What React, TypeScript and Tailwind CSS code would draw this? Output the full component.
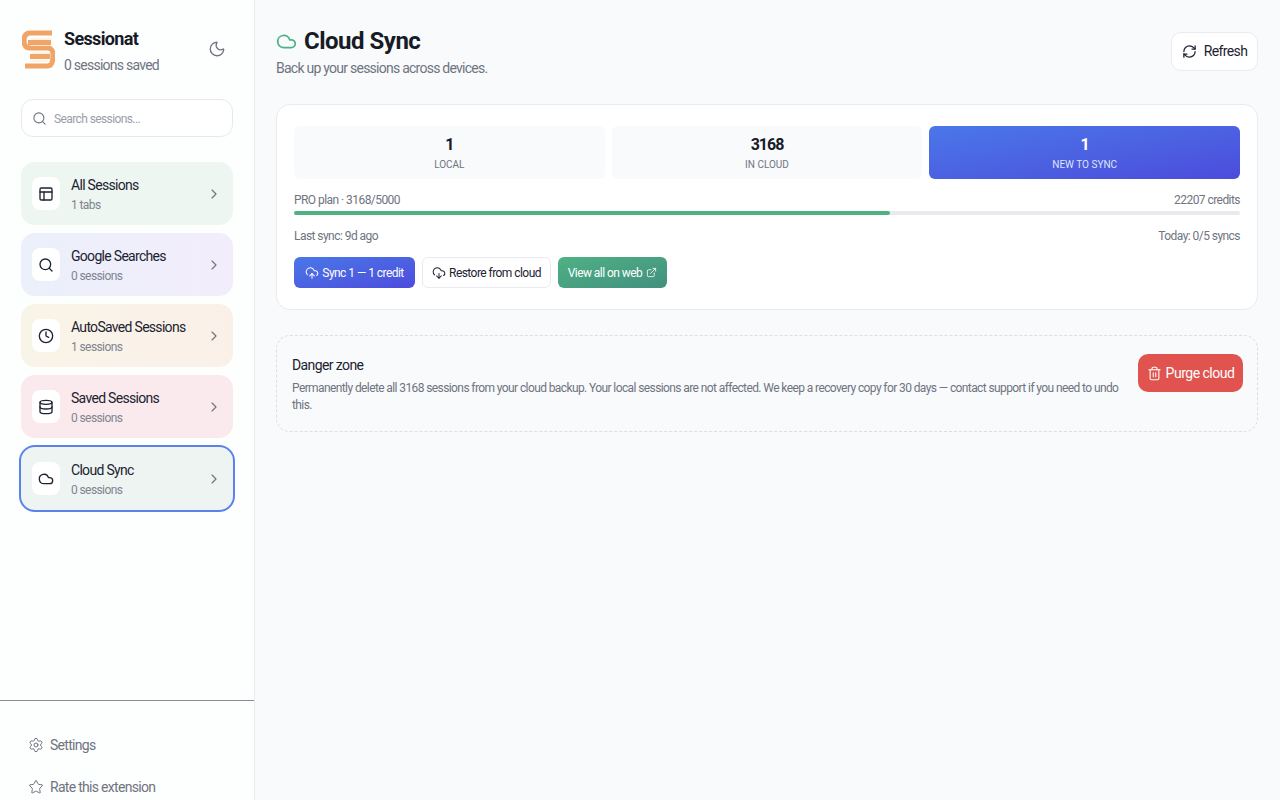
import {
  ChevronRight,
  Clock,
  Cloud,
  CloudDownload,
  CloudUpload,
  Database,
  ExternalLink,
  Moon,
  PanelsTopLeft,
  RefreshCw,
  Search,
  Settings,
  Star,
  Trash2,
} from 'lucide-react'
import type { ReactNode } from 'react'

function Logo() {
  return (
    <svg width="33" height="40" viewBox="0 0 33 40" fill="none" className="mt-[1px] shrink-0">
      <path
        d="M30 3H8.500C4 3 2 5.500 2 10.500S4 18 8.500 18H25.500C29.500 18 31 20 31 25.500S29.500 36 25.500 36H3"
        stroke="#f0a465"
        strokeWidth="5"
      />
      <path d="M6 12.500H29" stroke="#f0a465" strokeWidth="5" />
      <path d="M8 26.500H28" stroke="#f0a465" strokeWidth="5" />
      <path d="M9 9H30M9 15.500H27M10 23H28M8 31H26" stroke="#fbe6d4" strokeWidth="1" />
    </svg>
  )
}

function NavItem({
  icon,
  title,
  sub,
  bg,
  active,
}: {
  icon: ReactNode
  title: string
  sub: string
  bg: string
  active?: boolean
}) {
  return (
    <div
      className={`flex h-[63px] items-center rounded-[14px] pl-[11px] pr-[11px] ${bg} ${
        active ? 'mt-[1px] outline-2 outline-[#5b82ec]' : ''
      }`}
    >
      <div className="flex h-[33px] w-[28px] shrink-0 items-center justify-center rounded-[8px] bg-white text-[#1c2230]">
        {icon}
      </div>
      <div className="ml-[11px] mt-[3px] min-w-0 flex-1">
        <div className="text-[14px] leading-[18px] tracking-[-0.7px] text-[#1c2230]">{title}</div>
        <div className="mt-[2px] text-[12px] leading-[18px] tracking-[-0.6px] text-[#7f8490]">{sub}</div>
      </div>
      <ChevronRight size={16} strokeWidth={1.75} className="text-[#6f7480]" />
    </div>
  )
}

function Stat({ value, label, primary }: { value: string; label: string; primary?: boolean }) {
  return (
    <div
      className={`flex h-[53px] flex-1 flex-col items-center justify-center rounded-[6px] pt-[2px] ${
        primary ? 'bg-gradient-to-br from-[#4a77e8] to-[#4c4bdc] text-white' : 'bg-[#f9fafb]'
      }`}
    >
      <div
        className={`text-[16px] font-bold leading-[22px] tracking-[-1px] ${primary ? '' : 'text-[#161b26]'}`}
      >
        {value}
      </div>
      <div className={`mt-[1px] text-[10px] leading-[16px] ${primary ? 'text-[#dfe5fb]' : 'text-[#6f7480]'}`}>
        {label}
      </div>
    </div>
  )
}

export default function App() {
  return (
    <div className="flex h-[800px] w-[1280px] overflow-hidden bg-[#f9fafc] font-[Roboto,sans-serif]">
      <aside className="flex w-[255px] shrink-0 flex-col border-r border-[#e9ebef] bg-[#fdfefe]">
        <div className="flex items-start pl-[22px] pr-[28px] pt-[29px]">
          <Logo />
          <div className="ml-[9px] flex-1">
            <div className="text-[18px] font-bold leading-[20px] tracking-[-0.65px] text-[#161b26]">Sessionat</div>
            <div className="mt-[7px] text-[14px] leading-[18px] tracking-[-0.75px] text-[#6f7480]">0 sessions saved</div>
          </div>
          <Moon size={18} strokeWidth={1.75} className="mt-[11px] text-[#6f7480]" />
        </div>
        <div className="mx-[21px] mt-[25px] flex h-[38px] items-center rounded-[12px] border border-[#e7e9ee] bg-white pl-[10px]">
          <Search size={15} strokeWidth={1.75} className="text-[#6f7480]" />
          <span className="ml-[7px] pt-[1px] text-[12px] tracking-[-0.6px] text-[#9a9ea8]">Search sessions...</span>
        </div>
        <nav className="mx-[21px] mt-[25px] flex flex-col gap-[8px]">
          <NavItem
            icon={<PanelsTopLeft size={16} strokeWidth={2} />}
            title="All Sessions"
            sub="1 tabs"
            bg="bg-[#eef6f1]"
          />
          <NavItem
            icon={<Search size={16} strokeWidth={2} />}
            title="Google Searches"
            sub="0 sessions"
            bg="bg-gradient-to-r from-[#ebf0fb] to-[#f3edfb]"
          />
          <NavItem
            icon={<Clock size={16} strokeWidth={2} />}
            title="AutoSaved Sessions"
            sub="1 sessions"
            bg="bg-gradient-to-r from-[#f9f4e8] to-[#faf0e8]"
          />
          <NavItem
            icon={<Database size={16} strokeWidth={2} />}
            title="Saved Sessions"
            sub="0 sessions"
            bg="bg-[#faeaed]"
          />
          <NavItem
            icon={<Cloud size={16} strokeWidth={2} />}
            title="Cloud Sync"
            sub="0 sessions"
            bg="bg-[#edf4f1]"
            active
          />
        </nav>
        <div className="mt-auto h-[100px] border-t-[1.500px] border-[#8a8b95] pl-[28px] pt-[34px] text-[14px] tracking-[-0.7px] text-[#6f7480]">
          <div className="flex h-[20px] items-center gap-[6px]">
            <Settings size={16} strokeWidth={1.5} />
            Settings
          </div>
          <div className="mt-[22px] flex h-[20px] items-center gap-[6px]">
            <Star size={16} strokeWidth={1.5} />
            Rate this extension
          </div>
        </div>
      </aside>
      <main className="min-w-0 flex-1 pl-[21px] pr-[22px] pt-[27px]">
        <div className="flex items-start justify-between">
          <div>
            <div className="flex items-center gap-[7px]">
              <Cloud size={21} strokeWidth={2} className="text-[#4fb184]" />
              <h1 className="text-[24px] font-bold leading-[28px] tracking-[-0.5px] text-[#161b26]">Cloud Sync</h1>
            </div>
            <p className="mt-[4px] text-[14px] leading-[18px] tracking-[-0.75px] text-[#6f7480]">
              Back up your sessions across devices.
            </p>
          </div>
          <button className="mt-[5px] flex h-[39px] w-[87px] items-center justify-center gap-[7px] rounded-[10px] border border-[#e9ebef] bg-white text-[14px] tracking-[-0.6px] text-[#1c2230]">
            <RefreshCw size={15} strokeWidth={2} />
            Refresh
          </button>
        </div>
        <section className="mt-[27px] h-[206px] rounded-[14px] border border-[#e9ebef] bg-white px-[17px] pt-[21px]">
          <div className="flex gap-[7px]">
            <Stat value="1" label="LOCAL" />
            <Stat value="3168" label="IN CLOUD" />
            <Stat value="1" label="NEW TO SYNC" primary />
          </div>
          <div className="mt-[13px] flex justify-between text-[12px] leading-[16px] tracking-[-0.55px] text-[#6f7480]">
            <span>PRO plan · 3168/5000</span>
            <span>22207 credits</span>
          </div>
          <div className="mt-[3px] h-[4px] rounded-full bg-[#e9eaee]">
            <div className="h-full w-[63%] rounded-full bg-[#4fb184]" />
          </div>
          <div className="mt-[13px] flex justify-between text-[12px] leading-[16px] tracking-[-0.55px] text-[#6f7480]">
            <span>Last sync: 9d ago</span>
            <span>Today: 0/5 syncs</span>
          </div>
          <div className="mt-[13px] flex gap-[7px] text-[12px] tracking-[-0.55px]">
            <button className="flex h-[31px] w-[121px] items-center justify-center gap-[3px] rounded-[6px] bg-gradient-to-br from-[#4a77e8] to-[#4c4bdc] text-white">
              <CloudUpload size={14} strokeWidth={1.75} />
              Sync 1 — 1 credit
            </button>
            <button className="flex h-[31px] w-[129px] items-center justify-center gap-[3px] rounded-[6px] border border-[#e9ebef] bg-white text-[#1c2230]">
              <CloudDownload size={14} strokeWidth={1.75} />
              Restore from cloud
            </button>
            <button className="flex h-[31px] w-[109px] items-center justify-center gap-[4px] rounded-[6px] bg-gradient-to-br from-[#4fb184] to-[#42907f] text-white">
              View all on web
              <ExternalLink size={11} strokeWidth={1.75} />
            </button>
          </div>
        </section>
        <section className="mt-[25px] flex h-[97px] items-start rounded-[14px] border border-dashed border-[#dcdee3] pl-[15px] pr-[14px] pt-[18px]">
          <div className="flex-1">
            <div className="mt-[1px] text-[14px] leading-[20px] tracking-[-0.6px] text-[#1c2230]">Danger zone</div>
            <p className="mt-[5px] w-[830px] text-[12px] leading-[17px] tracking-[-0.6px] text-[#6f7480]">
              Permanently delete all 3168 sessions from your cloud backup. Your local sessions are not affected. We keep
              a recovery copy for 30 days — contact support if you need to undo this.
            </p>
          </div>
          <button className="flex h-[38px] w-[105px] items-center justify-center gap-[4px] rounded-[10px] bg-[#e0534f] text-[14px] tracking-[-0.5px] text-white">
            <Trash2 size={15} strokeWidth={1.75} />
            Purge cloud
          </button>
        </section>
      </main>
    </div>
  )
}
